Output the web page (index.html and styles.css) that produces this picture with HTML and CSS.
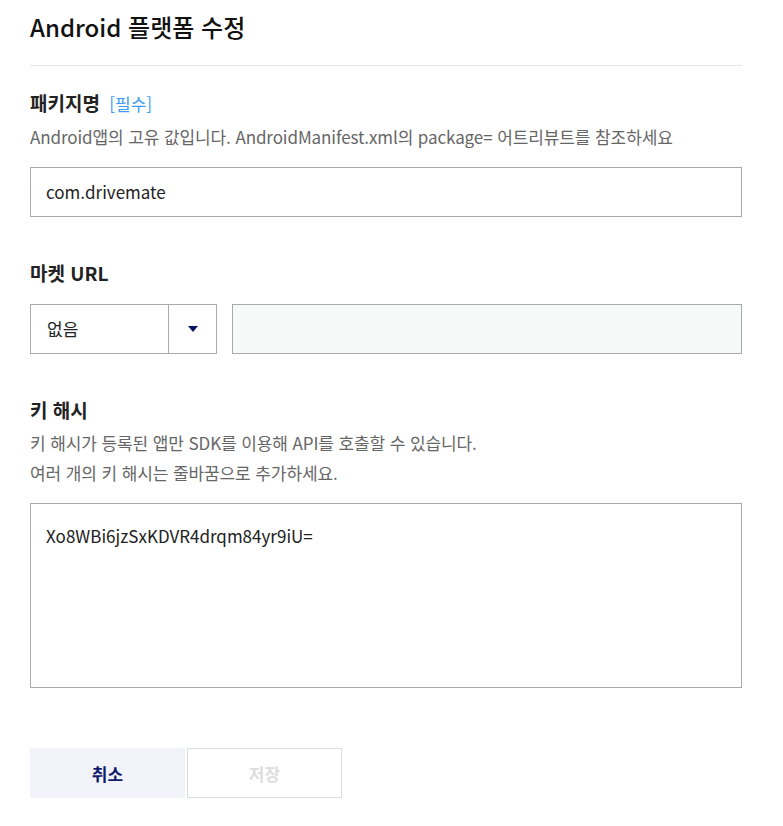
FILE: index.html
```html
<!DOCTYPE html>
<html lang="ko">
<head>
<meta charset="utf-8">
<title>Android 플랫폼 수정</title>
<link rel="stylesheet" href="styles.css">
</head>
<body>
<div class="page">
  <div class="header">
    <h1 class="title">Android 플랫폼 수정</h1>
  </div>

  <div class="field field-first">
    <div class="label">패키지명 <span class="req">[필수]</span></div>
    <p class="desc">Android앱의 고유 값입니다. AndroidManifest.xml의 package= 어트리뷰트를 참조하세요</p>
    <div class="input">com.drivemate</div>
  </div>

  <div class="field">
    <div class="label">마켓 URL</div>
    <div class="row">
      <div class="select">
        <span class="select-value">없음</span>
        <span class="select-arrow"><span class="tri"></span></span>
      </div>
      <div class="input input-disabled"></div>
    </div>
  </div>

  <div class="field">
    <div class="label">키 해시</div>
    <p class="desc">키 해시가 등록된 앱만 SDK를 이용해 API를 호출할 수 있습니다.<br>여러 개의 키 해시는 줄바꿈으로 추가하세요.</p>
    <div class="textarea">Xo8WBi6jzSxKDVR4drqm84yr9iU=</div>
  </div>

  <div class="buttons">
    <button class="btn btn-cancel">취소</button>
    <button class="btn btn-save">저장</button>
  </div>
</div>
</body>
</html>
```

FILE: styles.css
```css
* { box-sizing: border-box; }
html, body { margin: 0; padding: 0; background: #fff; }
body {
  font-family: "Noto Sans CJK KR", "Noto Sans", sans-serif;
  color: #222;
}
.page {
  width: 712px;
  margin-left: 30px;
  padding-top: 9px;
}
.header {
  padding-bottom: 20px;
  border-bottom: 1px solid #e6e6e6;
}
.title {
  margin: 0;
  font-size: 24px;
  line-height: 36px;
  font-weight: 500;
  color: #111;
}
.field { margin-top: 44px; }
.field-first { margin-top: 25px; }
.label {
  font-size: 19px;
  line-height: 24px;
  font-weight: 700;
  color: #222;
}
.req {
  font-size: 17px;
  font-weight: 400;
  color: #3d9cf2;
  margin-left: 4px;
}
.desc {
  margin: 6px 0 0;
  font-size: 17px;
  line-height: 30px;
  color: #666;
  letter-spacing: -0.1px;
}
.input {
  margin-top: 15px;
  height: 50px;
  border: 1px solid #aaa;
  padding: 0 15px;
  font-size: 17px;
  line-height: 48px;
  color: #222;
}
.row {
  display: flex;
  gap: 15px;
  margin-top: 19px;
}
.row .input { margin-top: 0; flex: 1; }
.input-disabled { background: #f7f8f8; }
.select {
  width: 187px;
  height: 50px;
  border: 1px solid #aaa;
  display: flex;
}
.select-value {
  flex: 1;
  padding-left: 16px;
  font-size: 17px;
  line-height: 48px;
  color: #222;
}
.select-arrow {
  width: 48px;
  border-left: 1px solid #aaa;
  display: flex;
  align-items: center;
  justify-content: center;
}
.tri {
  width: 0;
  height: 0;
  border-left: 5px solid transparent;
  border-right: 5px solid transparent;
  border-top: 6px solid #0b1566;
}
.textarea {
  margin-top: 15px;
  height: 185px;
  border: 1px solid #aaa;
  padding: 20px 15px;
  font-size: 17px;
  line-height: 24px;
  color: #222;
}
.buttons {
  display: flex;
  gap: 2px;
  margin-top: 60px;
}
.btn {
  width: 155px;
  height: 50px;
  font-family: "Noto Sans CJK KR", "Noto Sans", sans-serif;
  font-size: 17px;
  font-weight: 700;
  padding: 0;
  cursor: pointer;
}
.btn-cancel {
  background: #f2f3f8;
  border: none;
  color: #0e1a6b;
}
.btn-save {
  background: #fff;
  border: 1px solid #ddd;
  color: #ddd;
}
```
